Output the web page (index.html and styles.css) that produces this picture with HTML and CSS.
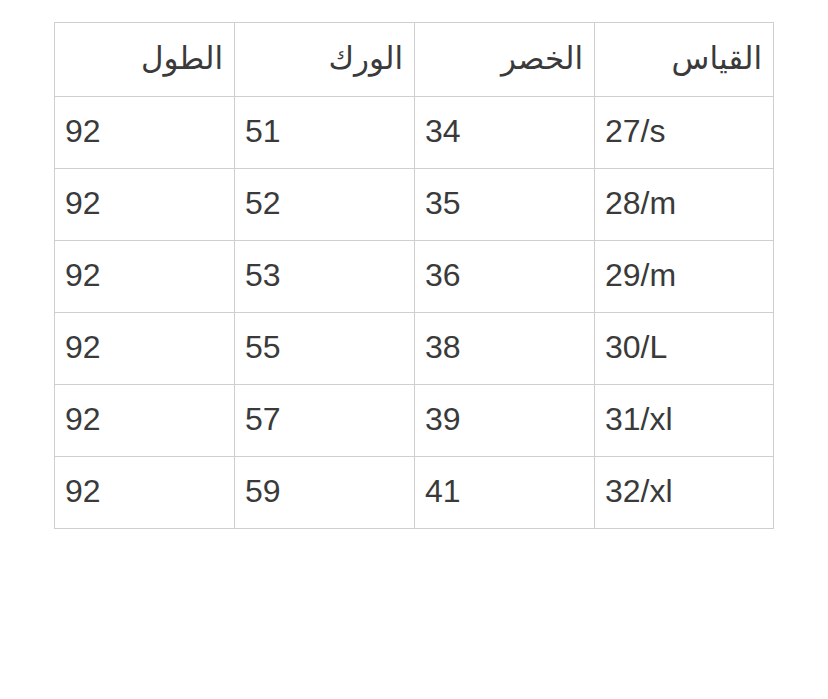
FILE: index.html
```html
<!DOCTYPE html>
<html lang="ar">
<head>
<meta charset="utf-8">
<link rel="stylesheet" href="styles.css">
</head>
<body>
<div class="wrap">
<table class="sizes">
  <colgroup><col class="c"><col class="c"><col class="c"><col class="c last"></colgroup>
  <thead>
    <tr><th>الطول</th><th>الورك</th><th>الخصر</th><th>القياس</th></tr>
  </thead>
  <tbody>
    <tr><td>92</td><td>51</td><td>34</td><td>27/s</td></tr>
    <tr><td>92</td><td>52</td><td>35</td><td>28/m</td></tr>
    <tr><td>92</td><td>53</td><td>36</td><td>29/m</td></tr>
    <tr><td>92</td><td>55</td><td>38</td><td>30/L</td></tr>
    <tr><td>92</td><td>57</td><td>39</td><td>31/xl</td></tr>
    <tr><td>92</td><td>59</td><td>41</td><td>32/xl</td></tr>
  </tbody>
</table>
</div>
</body>
</html>
```
FILE: styles.css
```css
html, body { margin: 0; padding: 0; background: #fff; }
.wrap { padding: 22px 0 0 54px; }
.sizes {
  border-collapse: collapse;
  table-layout: fixed;
  width: 719px;
  font-family: "Liberation Sans", "DejaVu Sans", sans-serif;
  color: #3a3a3a;
}
.c { width: 180px; }
.c.last { width: 179px; }
.sizes th, .sizes td {
  border: 1px solid #cfcfcf;
  vertical-align: middle;
}
.sizes th {
  height: 69px;
  text-align: right;
  direction: rtl;
  font-weight: normal;
  font-size: 31px;
  line-height: 40px;
  font-family: "DejaVu Sans", sans-serif;
  padding: 0 11px 4px 10px;
}
.sizes td {
  height: 67px;
  text-align: left;
  font-size: 32px;
  line-height: 36px;
  padding: 0 10px 4px 10px;
}
```
